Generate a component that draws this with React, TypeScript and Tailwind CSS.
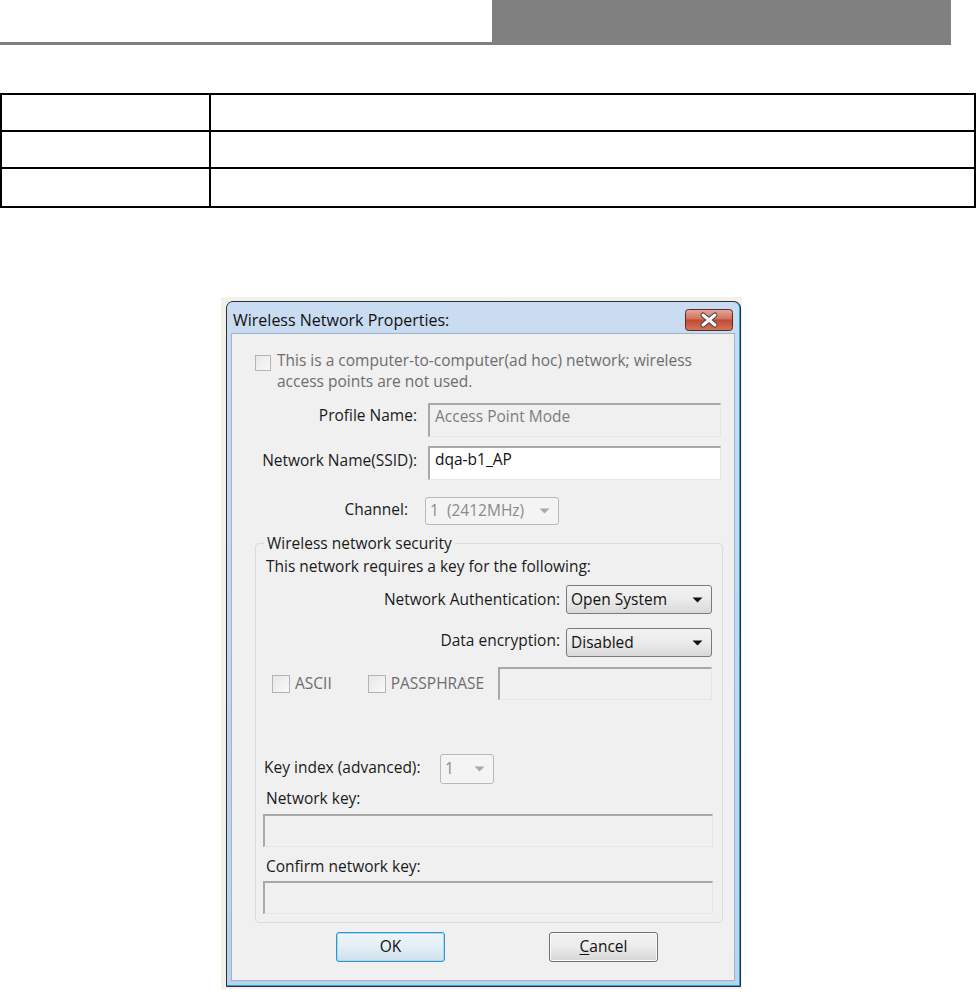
import React from 'react';

const font = "font-['Open_Sans','Noto_Sans',sans-serif]";

const Check = ({ size = 'w-[16px] h-[16px]' }: { size?: string }) => (
  <span
    className={`${size} shrink-0 border border-[#b4b4b4] bg-gradient-to-br from-[#e6e6e6] to-[#fafafa] block`}
  />
);

const Arrow = ({ disabled }: { disabled?: boolean }) => (
  <svg width="11" height="6" viewBox="0 0 11 6" className="shrink-0">
    <path d="M0.5 0.5 L10.5 0.5 L5.5 5.5 Z" fill={disabled ? '#a9a9a9' : '#111'} />
  </svg>
);

const Combo = ({
  value,
  width,
  height,
  disabled,
}: {
  value: string;
  width: string;
  height: string;
  disabled?: boolean;
}) => (
  <div
    className={`${width} ${height} shrink-0 flex items-center justify-between pl-[4px] pr-[8px] rounded-[3px] border ${
      disabled
        ? 'border-[#b6babd] bg-[#f4f4f4] text-[#8a8a8a]'
        : 'border-[#7a7a7a] bg-gradient-to-b from-[#f3f3f3] via-[#ebebeb] to-[#d9d9d9] text-[#111]'
    }`}
  >
    <span className="leading-none whitespace-pre">{value}</span>
    <Arrow disabled={disabled} />
  </div>
);

const Field = ({
  value,
  width,
  height,
  white,
}: {
  value?: string;
  width: string;
  height: string;
  white?: boolean;
}) => (
  <div
    className={`${width} ${height} shrink-0 leading-[22px] border-t-2 border-l-2 border-r border-b border-t-[#a8a8a8] border-l-[#a8a8a8] border-r-[#e6e6e6] border-b-[#e6e6e6] pl-[5px] ${
      white ? 'bg-white text-[#111]' : 'bg-[#f0f0f0] text-[#7d7d7d]'
    }`}
  >
    {value}
  </div>
);

export default function App() {
  return (
    <div className={`w-[976px] h-[995px] bg-white overflow-hidden ${font}`}>
      {/* header strip */}
      <div className="flex h-[45px]">
        <div className="w-[492px] border-b-[3px] border-[#808080]" />
        <div className="w-[459px] bg-[#808080]" />
      </div>

      {/* empty table */}
      <div className="mt-[48px] w-[976px] border-2 border-black">
        {[0, 1, 2].map((i) => (
          <div key={i} className={`flex h-[37px] ${i < 2 ? 'border-b-2 border-black' : ''}`}>
            <div className="w-[209px] border-r-2 border-black" />
            <div className="flex-1" />
          </div>
        ))}
      </div>

      {/* dialog */}
      <div className="mt-[89px] ml-[221px] w-[521px] pt-[4px] pb-[2px] px-[5px] bg-[#f4f1ea]">
        <div className="w-[515px] h-[686px] rounded-t-[7px] border border-[#2b2f36] bg-[#1ea9d8] pb-[1px] pr-[1px]">
          <div className="h-full rounded-t-[6px] bg-gradient-to-b from-[#c9dcf1] to-[#bcd2eb] px-[4px] pb-[4px] flex flex-col">
            <div className="h-[31px] flex items-center justify-between shrink-0">
              <span className="text-[16px] text-[#111] pl-[2px] pt-[4px]">Wireless Network Properties:</span>
              <svg width="48" height="22" viewBox="0 0 48 22" className="mt-[4px] mr-[2px]">
                <defs>
                  <linearGradient id="cls" x1="0" y1="0" x2="0" y2="1">
                    <stop offset="0" stopColor="#e6a89b" />
                    <stop offset="0.45" stopColor="#d0725e" />
                    <stop offset="0.5" stopColor="#c24a32" />
                    <stop offset="1" stopColor="#d0765c" />
                  </linearGradient>
                </defs>
                <rect x="0.5" y="0.5" width="47" height="21" rx="3" fill="url(#cls)" stroke="#5a2a2a" />
                <path d="M18 6 L30 16 M30 6 L18 16" stroke="#444" strokeWidth="5" strokeLinecap="round" />
                <path d="M18 6 L30 16 M30 6 L18 16" stroke="#fff" strokeWidth="3" strokeLinecap="round" />
              </svg>
            </div>

            <div className="flex-1 bg-[#f0f0f0] border border-[#9fb4cc] text-[15.5px] text-[#1a1a1a] flex flex-col">
              {/* ad hoc */}
              <div className="flex pl-[23px] pt-[16px]">
                <div className="pt-[5px]">
                  <Check />
                </div>
                <div className="ml-[6px] leading-[21px] text-[#6d6d6d]">
                  <div>This is a computer-to-computer(ad hoc) network; wireless</div>
                  <div>access points are not used.</div>
                </div>
              </div>

              {/* profile + ssid */}
              <div className="flex items-center mt-[11px]">
                <div className="w-[185px] text-right mb-[9px]">Profile Name:</div>
                <div className="ml-[11px]">
                  <Field value="Access Point Mode" width="w-[293px]" height="h-[34px]" />
                </div>
              </div>
              <div className="flex items-center mt-[9px]">
                <div className="w-[185px] text-right mb-[4px]">Network Name(SSID):</div>
                <div className="ml-[11px]">
                  <Field value="dqa-b1_AP" width="w-[293px]" height="h-[34px]" white />
                </div>
              </div>

              {/* channel */}
              <div className="flex items-center mt-[17px]">
                <div className="w-[176px] text-right mb-[3px]">Channel:</div>
                <div className="ml-[17px]">
                  <Combo value="1  (2412MHz)" width="w-[134px]" height="h-[28px]" disabled />
                </div>
              </div>

              {/* security group */}
              <div className="relative ml-[23px] mt-[18px] w-[468px] h-[380px] border border-[#d5dce2] rounded-[4px] px-[8px]">
                <div className="absolute -top-[11px] left-[8px] px-[3px] bg-[#f0f0f0] leading-[20px]">
                  Wireless network security
                </div>
                <div className="mt-[12px] pl-[2px] leading-[20px]">This network requires a key for the following:</div>
                <div className="flex items-center mt-[9px]">
                  <div className="w-[296px] text-right">Network Authentication:</div>
                  <div className="ml-[6px]">
                    <Combo value="Open System" width="w-[146px]" height="h-[29px]" />
                  </div>
                </div>
                <div className="flex items-center mt-[14px]">
                  <div className="w-[296px] text-right mb-[4px]">Data encryption:</div>
                  <div className="ml-[6px]">
                    <Combo value="Disabled" width="w-[146px]" height="h-[29px]" />
                  </div>
                </div>
                <div className="flex items-center mt-[10px] text-[#6d6d6d]">
                  <div className="ml-[8px]">
                    <Check size="w-[18px] h-[18px]" />
                  </div>
                  <span className="ml-[5px]">ASCII</span>
                  <div className="ml-[36px]">
                    <Check size="w-[18px] h-[18px]" />
                  </div>
                  <span className="ml-[5px]">PASSPHRASE</span>
                  <div className="ml-auto mr-[2px]">
                    <Field width="w-[214px]" height="h-[33px]" />
                  </div>
                </div>

                <div className="flex items-center mt-[54px]">
                  <span className="ml-[0px] mb-[2px]">Key index (advanced):</span>
                  <div className="ml-auto mr-[220px]">
                    <Combo value="1" width="w-[54px]" height="h-[30px]" disabled />
                  </div>
                </div>
                <div className="mt-[4px] pl-[2px] leading-[20px]">Network key:</div>
                <div className="mt-[6px] -ml-[1px]">
                  <Field width="w-[450px]" height="h-[33px]" />
                </div>
                <div className="mt-[9px] pl-[2px] leading-[20px]">Confirm network key:</div>
                <div className="mt-[5px] -ml-[1px]">
                  <Field width="w-[450px]" height="h-[33px]" />
                </div>
              </div>

              {/* buttons */}
              <div className="flex mt-[9px]">
                <button className="ml-[104px] w-[109px] h-[30px] rounded-[3px] border border-[#3c8fc7] shadow-[inset_0_0_0_1px_#9be0f7] bg-gradient-to-b from-[#eef5fa] via-[#e3eef6] to-[#cfe0ec] text-[#111]">
                  OK
                </button>
                <button className="ml-[104px] w-[109px] h-[30px] rounded-[3px] border border-[#707070] shadow-[inset_0_0_0_1px_#fbfbfb] bg-gradient-to-b from-[#f2f2f2] via-[#ebebeb] to-[#d6d6d6] text-[#111]">
                  <span className="underline underline-offset-2">C</span>ancel
                </button>
              </div>
            </div>
          </div>
        </div>
      </div>
    </div>
  );
}
